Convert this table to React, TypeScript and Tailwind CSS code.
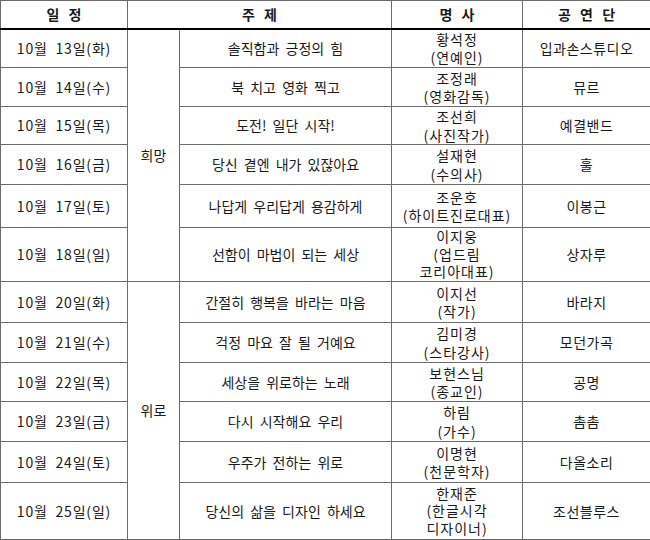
const rows = [
  { date: "10월 13일(화)", theme: "솔직함과 긍정의 힘", speaker: ["황석정", "(연예인)"], troupe: "입과손스튜디오", h: "h-[39px]" },
  { date: "10월 14일(수)", theme: "북 치고 영화 찍고", speaker: ["조정래", "(영화감독)"], troupe: "뮤르", h: "h-[39px]" },
  { date: "10월 15일(목)", theme: "도전! 일단 시작!", speaker: ["조선희", "(사진작가)"], troupe: "예결밴드", h: "h-[38px]" },
  { date: "10월 16일(금)", theme: "당신 곁엔 내가 있잖아요", speaker: ["설재현", "(수의사)"], troupe: "훌", h: "h-[40px]" },
  { date: "10월 17일(토)", theme: "나답게 우리답게 용감하게", speaker: ["조운호", "(하이트진로대표)"], troupe: "이봉근", h: "h-[43px]" },
  { date: "10월 18일(일)", theme: "선함이 마법이 되는 세상", speaker: ["이지웅", "(업드림", "코리아대표)"], troupe: "상자루", h: "h-[54px]" },
  { date: "10월 20일(화)", theme: "간절히 행복을 바라는 마음", speaker: ["이지선", "(작가)"], troupe: "바라지", h: "h-[41px]" },
  { date: "10월 21일(수)", theme: "걱정 마요 잘 될 거예요", speaker: ["김미경", "(스타강사)"], troupe: "모던가곡", h: "h-[40px]" },
  { date: "10월 22일(목)", theme: "세상을 위로하는 노래", speaker: ["보현스님", "(종교인)"], troupe: "공명", h: "h-[39px]" },
  { date: "10월 23일(금)", theme: "다시 시작해요 우리", speaker: ["하림", "(가수)"], troupe: "촘촘", h: "h-[40px]" },
  { date: "10월 24일(토)", theme: "우주가 전하는 위로", speaker: ["이명현", "(천문학자)"], troupe: "다올소리", h: "h-[41px]" },
  { date: "10월 25일(일)", theme: "당신의 삶을 디자인 하세요", speaker: ["한재준", "(한글시각", "디자이너)"], troupe: "조선블루스", h: "h-[57px]" },
]

const cell = "border border-[#6b6b6b] p-0 text-center align-middle"

export default function App() {
  return (
    <div className="w-[650px] h-[540px] bg-white font-['Malgun_Gothic','Noto_Sans_CJK_KR',sans-serif] text-[14px] text-[#1a1a1a]">
      <table className="w-[650px] table-fixed border-collapse border border-black">
        <colgroup>
          <col className="w-[127px]" />
          <col className="w-[52px]" />
          <col className="w-[212px]" />
          <col className="w-[131px]" />
          <col className="w-[128px]" />
        </colgroup>
        <thead>
          <tr className="h-[28px]">
            <th className={`${cell} border-b-2 border-b-black font-bold [word-spacing:6px]`}>일 정</th>
            <th colSpan={2} className={`${cell} border-b-2 border-b-black font-bold [word-spacing:6px]`}>
              주 제
            </th>
            <th className={`${cell} border-b-2 border-b-black font-bold [word-spacing:6px]`}>명 사</th>
            <th className={`${cell} border-b-2 border-b-black font-bold [word-spacing:6px]`}>공 연 단</th>
          </tr>
        </thead>
        <tbody>
          {rows.map((r, i) => {
            const groupTop = i === 6 ? "border-t-black" : ""
            // three-line speaker cells are packed a little tighter
            const lead = r.speaker.length > 2 ? "leading-[17.5px]" : "leading-[18.5px]"
            return (
              <tr key={r.date} className={r.h}>
                <td className={`${cell} ${groupTop} whitespace-pre tracking-[0.8px]`}>{r.date.replace(" ", "  ")}</td>
                {i === 0 && (
                  <td rowSpan={6} className={`${cell}`}>
                    희망
                  </td>
                )}
                {i === 6 && (
                  <td rowSpan={6} className={`${cell} ${groupTop}`}>
                    위로
                  </td>
                )}
                <td className={`${cell} ${groupTop} [word-spacing:3px]`}>{r.theme}</td>
                <td className={`${cell} ${groupTop} ${lead} tracking-[1px]`}>
                  {r.speaker.map((s) => (
                    <div key={s}>{s}</div>
                  ))}
                </td>
                <td className={`${cell} ${groupTop} tracking-[0.5px]`}>{r.troupe}</td>
              </tr>
            )
          })}
        </tbody>
      </table>
    </div>
  )
}
